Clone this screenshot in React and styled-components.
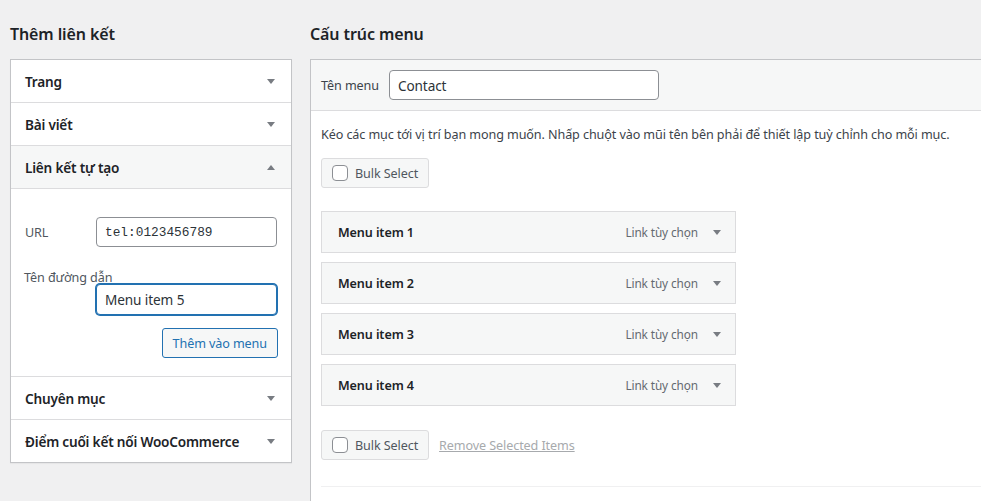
import React from "react";
import styled, { createGlobalStyle } from "styled-components";

const Global = createGlobalStyle`
  html, body { margin: 0; padding: 0; background: #f0f0f1; overflow: hidden; }
  body {
    font-family: "Noto Sans", "Open Sans", sans-serif;
    color: #1d2327;
    font-size: 12.6px;
    letter-spacing: -0.1px;
  }
  * { box-sizing: border-box; }
`;

const Page = styled.div`
  display: flex;
  align-items: flex-start;
  gap: 18px;
  padding: 22px 0 0 10px;
  width: 1000px;
  height: 501px;
  overflow: hidden;
`;

const LeftCol = styled.div`
  width: 282px;
  flex: none;
`;

const RightCol = styled.div`
  flex: 1;
`;

const Heading = styled.h2`
  margin: 0 0 13px;
  font-size: 16px;
  line-height: 24px;
  font-weight: 600;
  letter-spacing: -0.1px;
  color: #1d2327;
`;

const Accordion = styled.div`
  background: #fff;
  border: 1px solid #c3c4c7;
  box-shadow: 0 1px 1px rgba(0, 0, 0, 0.04);
`;

const Section = styled.div`
  border-bottom: 1px solid #dcdcde;
  &:last-child { border-bottom: none; }
`;

const SectionTitle = styled.div`
  display: flex;
  align-items: center;
  justify-content: space-between;
  padding: 0 16px 0 14px;
  font-size: 13.6px;
  font-weight: 600;
  letter-spacing: -0.2px;
  color: #1d2327;
  background: ${(p) => (p.$open ? "#f6f7f7" : "#fff")};
  border-bottom: ${(p) => (p.$open ? "1px solid #dcdcde" : "none")};
  height: ${(p) => (p.$open ? "43px" : "42px")};
`;

const Arrow = styled.span`
  width: 0;
  height: 0;
  border-left: 4px solid transparent;
  border-right: 4px solid transparent;
  ${(p) =>
    p.$up
      ? "border-bottom: 5px solid #787c82;"
      : "border-top: 5px solid #787c82;"}
`;

const SectionBody = styled.div`
  padding: 28px 14px 18px 14px;
  display: flex;
  flex-direction: column;
`;

const FieldRow = styled.div`
  display: flex;
  align-items: center;
  justify-content: space-between;
`;

const FieldLabel = styled.label`
  font-size: 12.6px;
  color: #50575e;
`;

const StackLabel = styled.label`
  font-size: 12.6px;
  color: #50575e;
  margin-top: 22px;
  margin-bottom: -3px;
  line-height: 18px;
  margin-left: -1px;
`;

const TextInput = styled.div`
  width: 181px;
  height: ${(p) => (p.$focus ? "31px" : "30px")};
  border: 1px solid ${(p) => (p.$focus ? "#2271b1" : "#8c8f94")};
  box-shadow: ${(p) => (p.$focus ? "0 0 0 1px #2271b1" : "none")};
  border-radius: 4px;
  background: #fff;
  display: flex;
  align-items: center;
  padding: 0 8px;
  font-size: 13.6px;
  color: #2c3338;
  font-family: ${(p) =>
    p.$mono ? '"Liberation Mono", "DejaVu Sans Mono", monospace' : "inherit"};
  ${(p) => (p.$mono ? "font-size: 12.8px; letter-spacing: 0;" : "")}
  align-self: flex-end;
`;

const SecondaryButton = styled.button`
  align-self: flex-end;
  margin-top: 13px;
  margin-right: -1px;
  height: 30px;
  padding: 0 10px;
  font-family: inherit;
  font-size: 12.6px;
  letter-spacing: -0.1px;
  color: #2271b1;
  border: 1px solid #2271b1;
  border-radius: 3px;
  background: #f6f7f7;
`;

const Panel = styled.div`
  background: #fff;
  border: 1px solid #c3c4c7;
  border-right: none;
  border-bottom: none;
  height: 442px;
`;

const PanelHeader = styled.div`
  display: flex;
  align-items: center;
  gap: 10px;
  height: 51px;
  padding: 0 10px;
  background: #f6f7f7;
  border-bottom: 1px solid #dcdcde;
`;

const HeaderLabel = styled.label`
  font-size: 12.6px;
  color: #3c434a;
`;

const NameInput = styled.div`
  width: 270px;
  height: 30px;
  border: 1px solid #8c8f94;
  border-radius: 4px;
  background: #fff;
  display: flex;
  align-items: center;
  padding: 0 8px;
  font-size: 13.6px;
  color: #2c3338;
`;

const PanelBody = styled.div`
  padding: 14px 0 0 10px;
`;

const Instructions = styled.p`
  margin: 0;
  font-size: 12.6px;
  line-height: 20px;
  color: #3c434a;
`;

const BulkButton = styled.div`
  display: inline-flex;
  align-items: center;
  gap: 7px;
  height: 30px;
  padding: 0 10px;
  border: 1px solid #dcdcde;
  border-radius: 3px;
  background: #f6f7f7;
  font-size: 12.6px;
  color: #50575e;
`;

const Checkbox = styled.span`
  width: 16px;
  height: 16px;
  border: 1px solid #8c8f94;
  border-radius: 4px;
  background: #fff;
`;

const TopBulk = styled.div`
  margin-top: 13px;
`;

const ItemList = styled.div`
  display: flex;
  flex-direction: column;
  gap: 9px;
  margin-top: 23px;
  width: 415px;
`;

const Item = styled.div`
  display: flex;
  align-items: center;
  height: 42px;
  padding: 0 14px 0 16px;
  border: 1px solid #dcdcde;
  background: #f6f7f7;
`;

const ItemTitle = styled.span`
  flex: 1;
  font-size: 12.6px;
  font-weight: 600;
  color: #1d2327;
`;

const ItemType = styled.span`
  font-size: 11.8px;
  color: #646970;
  margin-right: 15px;
`;

const BottomActions = styled.div`
  display: flex;
  align-items: center;
  gap: 10px;
  margin-top: 24px;
`;

const RemoveLink = styled.span`
  font-size: 12.6px;
  color: #a7aaad;
  text-decoration: underline;
`;

const Separator = styled.div`
  margin-top: 26px;
  border-top: 1px solid #f0f0f1;
`;

const leftSections = [
  { title: "Trang" },
  { title: "Bài viết" },
  { title: "Liên kết tự tạo", open: true },
  { title: "Chuyên mục" },
  { title: "Điểm cuối kết nối WooCommerce" },
];

const items = ["Menu item 1", "Menu item 2", "Menu item 3", "Menu item 4"];

export default function App() {
  return (
    <>
      <Global />
      <Page>
        <LeftCol>
          <Heading>Thêm liên kết</Heading>
          <Accordion>
            {leftSections.map((s) => (
              <Section key={s.title}>
                <SectionTitle $open={s.open}>
                  <span>{s.title}</span>
                  <Arrow $up={s.open} />
                </SectionTitle>
                {s.open && (
                  <SectionBody>
                    <FieldRow>
                      <FieldLabel>URL</FieldLabel>
                      <TextInput $mono>tel:0123456789</TextInput>
                    </FieldRow>
                    <StackLabel>Tên đường dẫn</StackLabel>
                    <TextInput $focus>Menu item 5</TextInput>
                    <SecondaryButton>Thêm vào menu</SecondaryButton>
                  </SectionBody>
                )}
              </Section>
            ))}
          </Accordion>
        </LeftCol>
        <RightCol>
          <Heading>Cấu trúc menu</Heading>
          <Panel>
            <PanelHeader>
              <HeaderLabel>Tên menu</HeaderLabel>
              <NameInput>Contact</NameInput>
            </PanelHeader>
            <PanelBody>
              <Instructions>
                Kéo các mục tới vị trí bạn mong muốn. Nhấp chuột vào mũi tên bên phải để thiết lập tuỳ chỉnh cho mỗi mục.
              </Instructions>
              <TopBulk>
                <BulkButton>
                  <Checkbox />
                  Bulk Select
                </BulkButton>
              </TopBulk>
              <ItemList>
                {items.map((it) => (
                  <Item key={it}>
                    <ItemTitle>{it}</ItemTitle>
                    <ItemType>Link tùy chọn</ItemType>
                    <Arrow />
                  </Item>
                ))}
              </ItemList>
              <BottomActions>
                <BulkButton>
                  <Checkbox />
                  Bulk Select
                </BulkButton>
                <RemoveLink>Remove Selected Items</RemoveLink>
              </BottomActions>
              <Separator />
            </PanelBody>
          </Panel>
        </RightCol>
      </Page>
    </>
  );
}
